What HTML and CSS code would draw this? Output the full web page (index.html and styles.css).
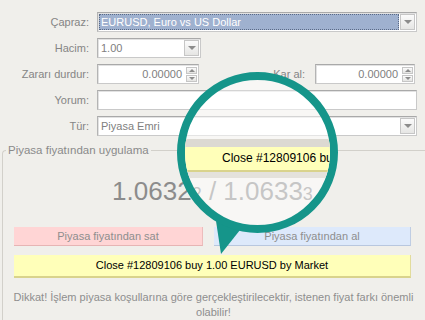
FILE: index.html
```html
<!DOCTYPE html>
<html lang="tr">
<head>
<meta charset="utf-8">
<title>Order</title>
<link rel="stylesheet" href="styles.css">
</head>
<body>
<div class="form">
  <div class="lbl">Çapraz:</div>
  <div class="field sel">
    <span class="hl">EURUSD, Euro vs US Dollar</span>
    <span class="dd"><i class="tri"></i></span>
  </div>

  <div class="lbl">Hacim:</div>
  <div class="field vol">
    <span class="val">1.00</span>
    <span class="dd"><i class="tri"></i></span>
  </div>

  <div class="lbl">Zararı durdur:</div>
  <div class="row3">
    <div class="field num">
      <span class="val r">0.00000</span>
      <span class="spin"><b><i class="up"></i></b><b><i class="down"></i></b></span>
    </div>
    <div class="lbl2">Kar al:</div>
    <div class="field num num2">
      <span class="val r">0.00000</span>
      <span class="spin"><b><i class="up"></i></b><b><i class="down"></i></b></span>
    </div>
  </div>

  <div class="lbl">Yorum:</div>
  <div class="field"></div>

  <div class="lbl">Tür:</div>
  <div class="field">
    <span class="val">Piyasa Emri</span>
    <span class="dd"><i class="tri"></i></span>
  </div>
</div>

<fieldset class="market">
  <legend>Piyasa fiyatından uygulama</legend>
  <div class="price">1.0632<small>2</small> / 1.0633<small>3</small></div>
  <div class="btns">
    <div class="btn sell">Piyasa fiyatından sat</div>
    <div class="btn buy">Piyasa fiyatından al</div>
  </div>
  <div class="btn close">Close #12809106 buy 1.00 EURUSD by Market</div>
  <p class="warn">Dikkat! İşlem piyasa koşullarına göre gerçekleştirilecektir, istenen fiyat farkı önemli olabilir!</p>
</fieldset>

<svg class="tail" width="30" height="40" viewBox="0 0 30 40"><polygon points="1,2 25,11 6,35" fill="#15958a"/></svg>
<div class="lens">
  <div class="lens-strip">Close #12809106 bu</div>
  <div class="lens-shade"></div>
</div>
</body>
</html>
```
FILE: styles.css
```css
body {
  margin: 0;
  width: 425px;
  height: 320px;
  overflow: hidden;
  position: relative;
  background: #f0efeb;
  font-family: "Liberation Sans", Arial, sans-serif;
  font-size: 11px;
  color: #858585;
}

.form {
  padding: 12px 8px 0 0;
  display: grid;
  grid-template-columns: 89px 1fr;
  column-gap: 8px;
  row-gap: 6px;
}

.lbl {
  text-align: right;
  height: 20px;
  line-height: 20px;
}

.field {
  height: 20px;
  box-sizing: border-box;
  background: #fff;
  border: 1px solid #c9c9c9;
  border-top-color: #a9a9a9;
  border-left-color: #b4b4b4;
  box-shadow: inset 1px 1px 0 #e2e2e2;
  display: flex;
  align-items: center;
}

.val {
  padding-left: 3px;
  color: #808080;
}
.val.r {
  flex: 1;
  text-align: right;
  padding-right: 4px;
}

.sel .hl {
  flex: 1;
  height: 16px;
  line-height: 16px;
  margin-left: 1px;
  padding-left: 2px;
  box-sizing: border-box;
  background: #9fb1cf;
  color: #fff;
  outline: 1px dotted #5a6a86;
  outline-offset: -1px;
}

.dd {
  width: 15px;
  height: 16px;
  margin-left: auto;
  margin-right: 1px;
  box-sizing: border-box;
  background: linear-gradient(#fbfbfb, #e6e6e4);
  border: 1px solid #c6c6c6;
  display: flex;
  align-items: center;
  justify-content: center;
}
.sel .dd { margin-left: 1px; }

.tri {
  width: 0;
  height: 0;
  border-left: 4px solid transparent;
  border-right: 4px solid transparent;
  border-top: 4px solid #8c8c8c;
}

.vol { width: 104px; }

.row3 {
  display: flex;
  height: 20px;
}
.num { width: 102px; }
.num2 { width: 100px; margin-right: 2px; }
.lbl2 {
  flex: 1;
  text-align: right;
  padding-right: 10px;
  line-height: 20px;
}

.spin {
  display: flex;
  flex-direction: column;
  gap: 1px;
  width: 11px;
  margin-right: 1px;
}
.spin b {
  height: 7px;
  box-sizing: border-box;
  background: linear-gradient(#fbfbfb, #e4e4e2);
  border: 1px solid #c6c6c6;
  display: flex;
  align-items: center;
  justify-content: center;
}
.spin .up {
  border-left: 3px solid transparent;
  border-right: 3px solid transparent;
  border-bottom: 3px solid #8c8c8c;
}
.spin .down {
  border-left: 3px solid transparent;
  border-right: 3px solid transparent;
  border-top: 3px solid #8c8c8c;
}

.market {
  margin: 7px 0 0 2px;
  padding: 0 14px 0 11px;
  border: 0;
  border-top: 1px solid #d2d0ca;
  border-left: 1px solid #d2d0ca;
  border-top-left-radius: 4px;
  min-width: 0;
}
.market legend {
  margin-left: -8px;
  padding: 0 2px;
  line-height: 14px;
  font-size: 11.5px;
  color: #8a8a8a;
}

.price {
  margin-top: 19px;
  text-align: center;
  font-size: 26px;
  line-height: 30px;
  color: #8c8c8c;
}
.price small {
  font-size: 18px;
}

.btns {
  margin-top: 18px;
  display: grid;
  grid-template-columns: 189px 1fr;
  column-gap: 11px;
}

.btn {
  box-sizing: border-box;
  text-align: center;
}
.sell, .buy {
  height: 19px;
  line-height: 18px;
  color: #8e8e8e;
}
.sell {
  background: #ffd5d5;
  border-right: 1px solid #ecbcbc;
  border-bottom: 1px solid #e6b4b4;
}
.buy {
  background: #dde9fb;
  border-right: 1px solid #bfcde3;
  border-bottom: 1px solid #b8c7df;
}
.close {
  margin-top: 9px;
  height: 23px;
  line-height: 21px;
  background: #ffffb9;
  border-bottom: 2px solid #d9d38c;
  border-right: 1px solid #e2dc9c;
  color: #000;
}

.warn {
  margin: 12px -8px 0 -6px;
  text-align: center;
  line-height: 15px;
  color: #8e8e8e;
}

.tail {
  position: absolute;
  left: 215px;
  top: 219px;
}

.lens {
  position: absolute;
  left: 177px;
  top: 72px;
  width: 161px;
  height: 161px;
  box-sizing: border-box;
  border: 8px solid #15958a;
  border-radius: 50%;
  overflow: hidden;
  background: rgba(255, 255, 255, 0.5);
}
.lens-strip {
  margin-top: 59px;
  height: 33px;
  box-sizing: border-box;
  border-top: 8px solid #dcd9d2;
  border-bottom: 2px solid #d9d38c;
  background: #ffffb9;
  padding-left: 37px;
  line-height: 23px;
  font-size: 12px;
  color: #000;
  white-space: nowrap;
}
.lens-shade {
  height: 6px;
  background: #e4e2dc;
}
```
